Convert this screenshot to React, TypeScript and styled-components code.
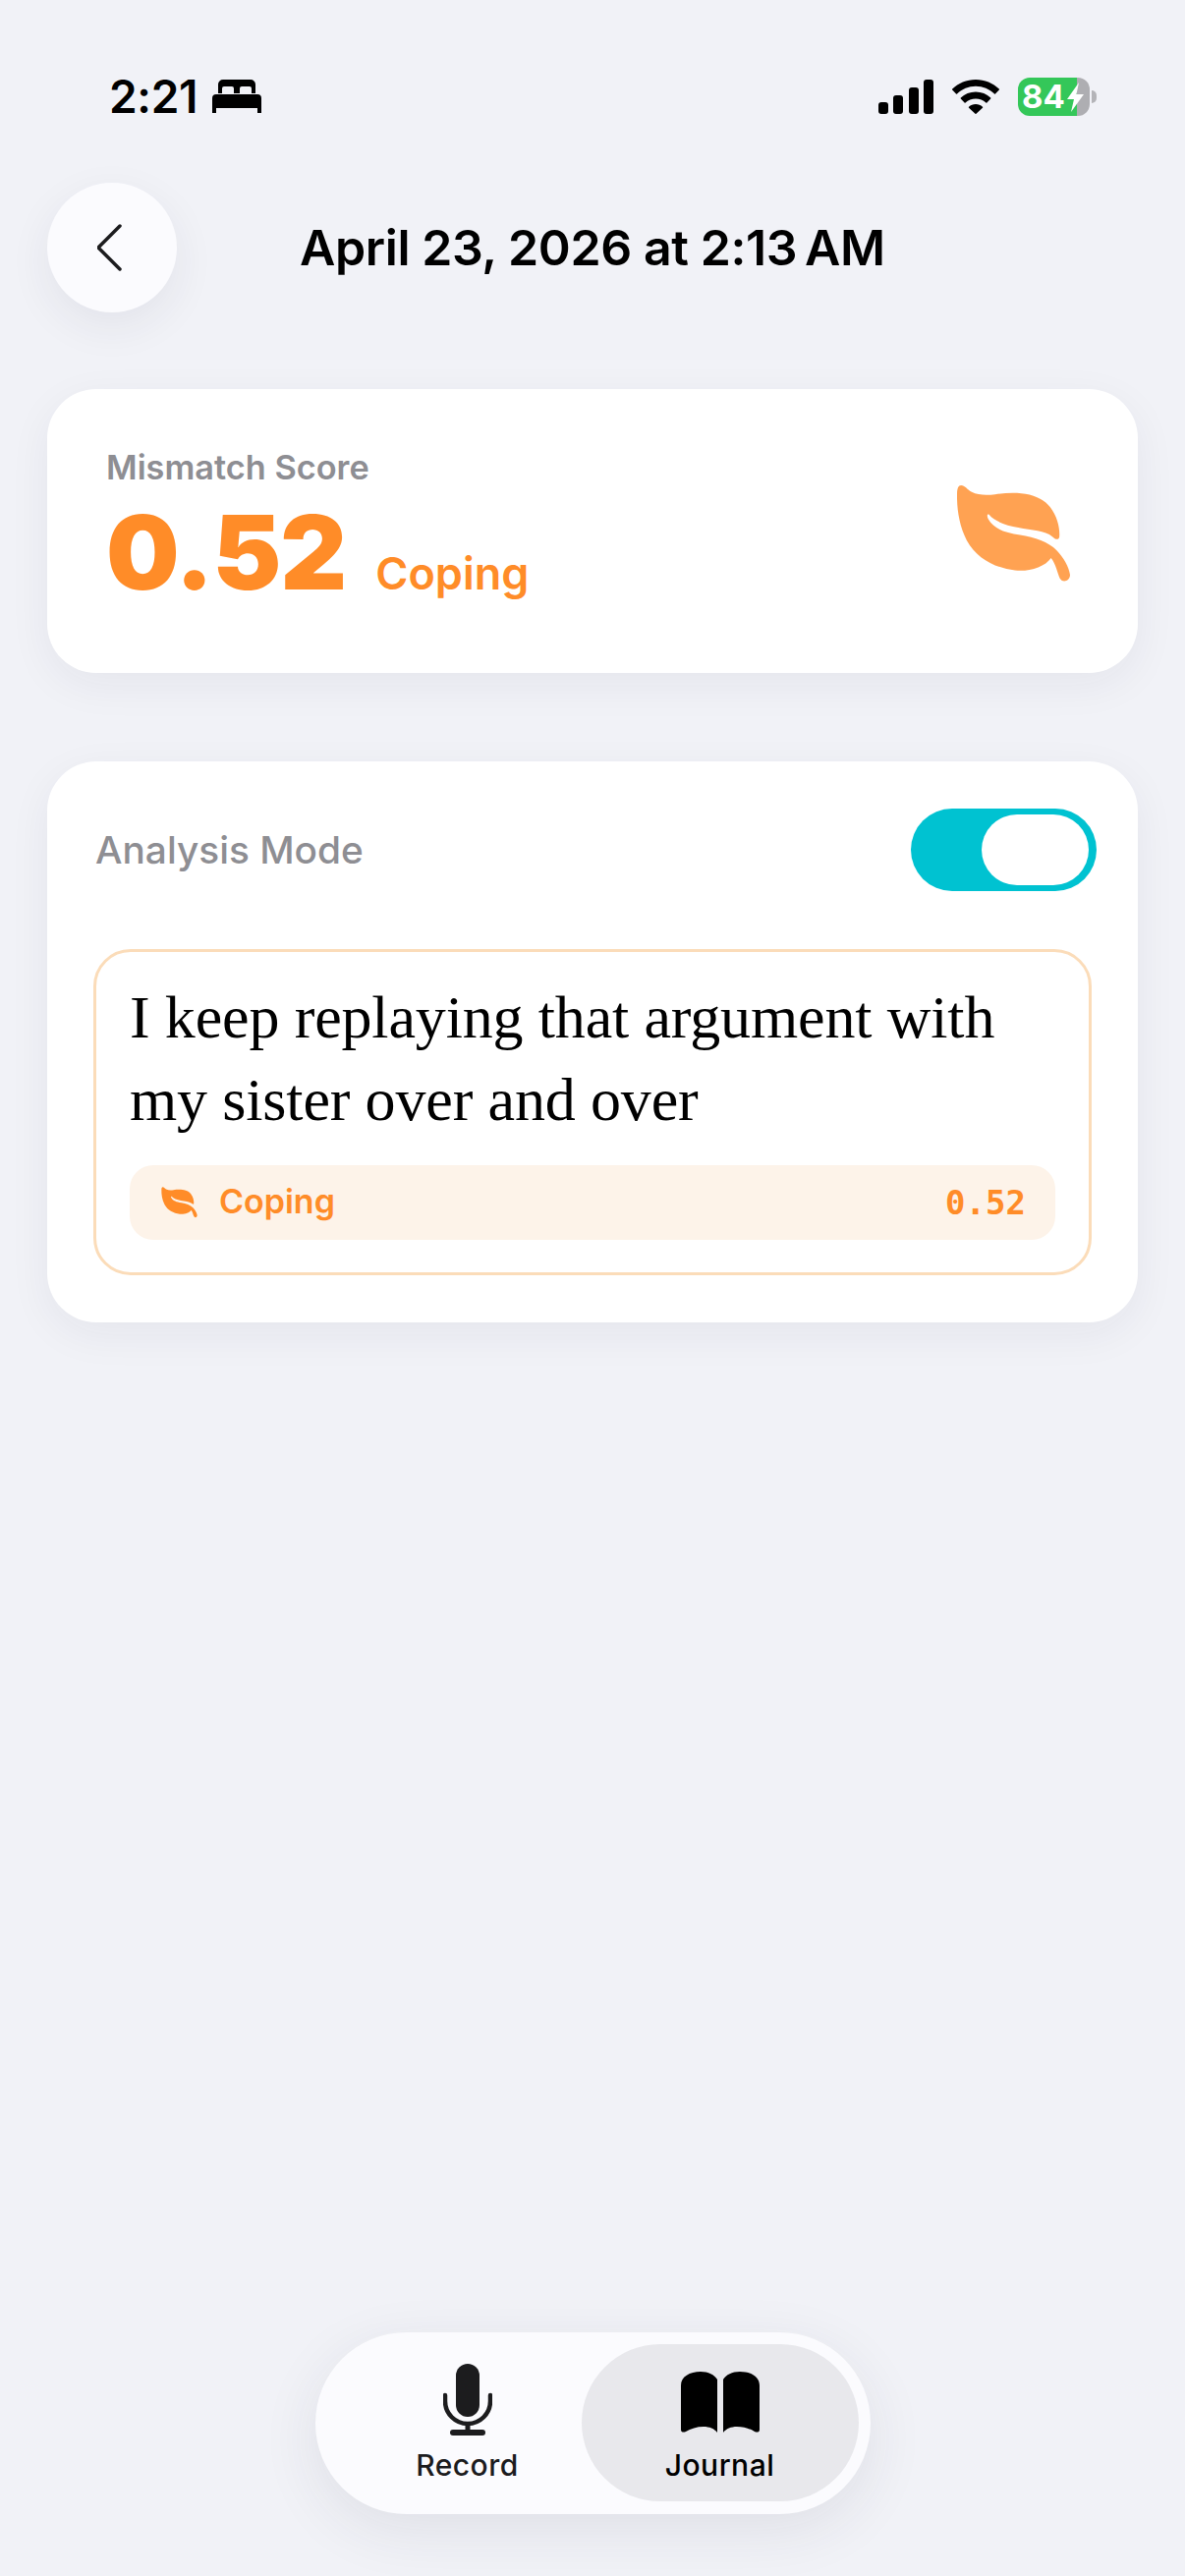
import React from "react";
import styled, { createGlobalStyle } from "styled-components";

const Global = createGlobalStyle`
  html, body { margin: 0; padding: 0; background: #f1f2f7; }
  * { box-sizing: border-box; }
`;

const Page = styled.div`
  width: 1206px;
  height: 2622px;
  display: flex;
  flex-direction: column;
  overflow: hidden;
  background: #f1f2f7;
  font-family: Inter, "Liberation Sans", sans-serif;
  color: #000;
`;

const StatusBar = styled.div`
  height: 78px;
  margin-top: 59px;
  padding: 0 97px 0 111px;
  display: flex;
  align-items: center;
  justify-content: space-between;
`;

const StatusGroup = styled.div<{ $gap: number }>`
  display: flex;
  align-items: center;
  gap: ${(p) => p.$gap}px;
`;

const Clock = styled.span`
  font-size: 46px;
  font-weight: 600;
  letter-spacing: -0.3px;
  line-height: 46px;
`;

const Battery = styled.div`
  position: relative;
  width: 73px;
  height: 39px;
  border-radius: 12px;
  background: linear-gradient(90deg, #34c759 0 82%, #aeaeb2 82% 100%);
  color: #fff;
  font-size: 33px;
  font-weight: 700;
  line-height: 39px;
  padding-left: 4px;
  &::after {
    content: "";
    position: absolute;
    right: -7px;
    top: 13px;
    width: 5px;
    height: 13px;
    border-radius: 0 6px 6px 0;
    background: #b4b4b8;
  }
`;

const BoltMark = styled.svg`
  position: absolute;
  left: 50px;
  top: 5px;
`;

const Header = styled.div`
  margin-top: 49px;
  padding: 0 48px;
  height: 132px;
  display: flex;
  align-items: center;
  gap: 125px;
`;

const BackButton = styled.button`
  width: 132px;
  height: 132px;
  padding: 0;
  border: 0;
  border-radius: 50%;
  background: #fbfbfe;
  box-shadow: 0 14px 44px rgba(40, 40, 70, 0.07);
  display: flex;
  align-items: center;
  justify-content: center;
`;

const Title = styled.h1`
  margin: 0;
  font-size: 50px;
  font-weight: 600;
  letter-spacing: -0.4px;
  line-height: 60px;
`;

const Card = styled.section<{ $h: number; $top: number }>`
  margin: ${(p) => p.$top}px 48px 0;
  height: ${(p) => p.$h}px;
  border-radius: 50px;
  background: #fff;
  box-shadow: 0 12px 44px rgba(40, 40, 70, 0.06);
`;

const ScoreCard = styled(Card)`
  padding: 0 68px 0 60px;
  display: flex;
  align-items: center;
  justify-content: space-between;
`;

const ScoreText = styled.div`
  display: flex;
  flex-direction: column;
  margin-top: -12px;
`;

const ScoreLabel = styled.span`
  color: #8e8e93;
  font-size: 34.3px;
  font-weight: 600;
  line-height: 40px;
`;

const ModeLabel = styled.span`
  color: #8e8e93;
  font-size: 38.8px;
  font-weight: 500;
  line-height: 46px;
`;

const ScoreRow = styled.div`
  display: flex;
  align-items: baseline;
  gap: 30px;
  margin-top: 14px;
`;

const ScoreValue = styled.span`
  color: #ff8c28;
  font-size: 105px;
  font-weight: 900;
  line-height: 104px;
  letter-spacing: -1px;
`;

const ScoreTag = styled.span`
  color: #ff8c28;
  font-size: 45px;
  font-weight: 600;
`;

const LeafMark = styled.svg<{ $fade?: boolean }>`
  display: block;
  flex: none;
  opacity: ${(p) => (p.$fade ? 0.8 : 1)};
  margin-top: ${(p) => (p.$fade ? 6 : 0)}px;
`;

const AnalysisCard = styled(Card)`
  padding: 48px 47px 48px 47px;
  display: flex;
  flex-direction: column;
`;

const ModeRow = styled.div`
  display: flex;
  align-items: center;
  justify-content: space-between;
  height: 84px;
  padding-left: 2px;
  margin-right: -5px;
`;

const Toggle = styled.div`
  width: 189px;
  height: 84px;
  border-radius: 42px;
  background: #00c2d1;
  display: flex;
  align-items: center;
  justify-content: flex-end;
  padding-right: 8px;
`;

const Knob = styled.div`
  width: 109px;
  height: 72px;
  border-radius: 36px;
  background: #fff;
`;

const Sentence = styled.div`
  margin-top: 59px;
  height: 333px;
  border: 3px solid #fbdcb9;
  border-radius: 38px;
  padding: 24px 34px 0;
  display: flex;
  flex-direction: column;
`;

const SentenceText = styled.p`
  margin: 0;
  font-family: "Liberation Serif", serif;
  font-size: 62px;
  line-height: 84px;
  letter-spacing: -0.15px;
  color: #000;
`;

const Chip = styled.div`
  margin-top: 25px;
  height: 76px;
  border-radius: 24px;
  background: #fdf3e9;
  padding: 0 30px 0 32px;
  display: flex;
  align-items: center;
  color: #ff8c28;
`;

const ChipLabel = styled.span`
  font-size: 34px;
  font-weight: 600;
  line-height: 40px;
  margin: -2px 0 0 22px;
  flex: 1;
`;

const ChipValue = styled.span`
  font-family: "DejaVu Sans Mono", monospace;
  font-size: 34px;
  font-weight: 700;
`;

const Nav = styled.nav`
  margin: auto auto 63px;
  width: 565px;
  height: 185px;
  border-radius: 93px;
  background: #fbfbfe;
  box-shadow: 0 16px 60px rgba(40, 40, 70, 0.09);
  padding: 12px 12px 12px 0;
  display: flex;
`;

const NavItem = styled.div<{ $active?: boolean }>`
  width: ${(p) => (p.$active ? 282 : 271)}px;
  height: 160px;
  padding-left: ${(p) => (p.$active ? 0 : 39)}px;
  border-radius: 80px;
  background: ${(p) => (p.$active ? "#e8e8ec" : "transparent")};
  display: flex;
  flex-direction: column;
  align-items: center;
  color: #000;
`;

const NavIcon = styled.div`
  height: 94px;
  display: flex;
  align-items: flex-end;
  justify-content: center;
`;

const BookMark = styled.svg`
  margin-bottom: 4px;
`;

const NavLabel = styled.span<{ $active?: boolean }>`
  margin-top: 11px;
  font-size: 30px;
  font-weight: 500;
  line-height: 36px;
  letter-spacing: 0.5px;
  color: ${(p) => (p.$active ? "#000" : "#1c1c1e")};
`;

const leafPath =
  "M88 70C100 70 105 82 120 90C140 100 165 100 190 97C250 88 320 90 355 135C378 165 385 200 383 225C381 236 370 232 362 224C340 205 300 205 260 197C225 190 190 180 172 158C166 154 165 163 170 172C185 200 220 212 265 219C310 226 350 240 375 265C395 285 412 315 415 338C416 355 395 365 385 350C378 335 372 305 358 288C340 315 290 330 250 325C190 318 135 290 105 235C82 190 75 140 76 95C76 80 80 70 88 70Z";

const Leaf = ({ size, fade }: { size: number; fade?: boolean }) => (
  <LeafMark $fade={fade} width={size} height={size * (300 / 345)} viewBox="73 67 345 300" fill="#ff8c28">
    <path d={leafPath} />
  </LeafMark>
);

export default function App() {
  return (
    <Page>
      <Global />
      <StatusBar>
        <StatusGroup $gap={15}>
          <Clock>2:21</Clock>
          <svg width="50" height="34" viewBox="0 0 50 34" fill="#000">
            <path d="M6 14V5a5 5 0 0 1 5-5h28a5 5 0 0 1 5 5v9h-4V9a2 2 0 0 0-2-2h-8a2 2 0 0 0-2 2v5h-6V9a2 2 0 0 0-2-2h-8a2 2 0 0 0-2 2v5Z" />
            <path d="M4 15h42a4 4 0 0 1 4 4v15h-4v-5H4v5H0V19a4 4 0 0 1 4-4Z" />
          </svg>
        </StatusGroup>
        <StatusGroup $gap={19}>
          <svg width="56" height="35" viewBox="0 0 56 35" fill="#000">
            <rect x="0" y="23" width="10" height="12" rx="3" />
            <rect x="15" y="16" width="10" height="19" rx="3" />
            <rect x="31" y="8" width="10" height="27" rx="3" />
            <rect x="46" y="0" width="10" height="35" rx="3" />
          </svg>
          <svg width="48" height="35" viewBox="0 0 48 35" fill="#000">
            <path d="M24 0c9.300 0 17.600 3.600 23.800 9.500.3.300.3.700 0 1l-3.800 3.900c-.3.300-.7.300-1 0C38 9.700 31.300 6.800 24 6.800S10 9.700 5 14.400c-.3.300-.7.300-1 0L.2 10.500c-.3-.3-.3-.7 0-1C6.400 3.600 14.700 0 24 0Z" />
            <path d="M24 12.500c5.900 0 11.200 2.300 15.200 6 .3.300.3.700 0 1l-3.800 3.900c-.3.300-.7.300-1 0-2.700-2.500-6.400-4-10.400-4s-7.700 1.500-10.400 4c-.3.300-.7.300-1 0l-3.800-3.900c-.3-.3-.3-.7 0-1 4-3.700 9.300-6 15.200-6Z" />
            <path d="M24 25c2.700 0 5.100 1 7 2.700.3.300.3.700 0 1l-6.500 6c-.3.300-.7.300-1 0l-6.500-6c-.3-.3-.3-.7 0-1 1.900-1.700 4.300-2.700 7-2.700Z" />
          </svg>
          <Battery>
            84
            <BoltMark width="17" height="30" viewBox="0 0 17 30" fill="#fff">
              <path d="M12 0 0 17h7l-3 13L17 12H9.500Z" />
            </BoltMark>
          </Battery>
        </StatusGroup>
      </StatusBar>

      <Header>
        <BackButton aria-label="Back">
          <svg width="30" height="48" viewBox="0 0 30 48" fill="none" stroke="#1c1c1e" strokeWidth="3.500" strokeLinecap="round" strokeLinejoin="round">
            <path d="M23 2 1 24l22 22" />
          </svg>
        </BackButton>
        <Title>April 23, 2026 at 2:13{"\u202F"}AM</Title>
      </Header>

      <ScoreCard $h={289} $top={78}>
        <ScoreText>
          <ScoreLabel>Mismatch Score</ScoreLabel>
          <ScoreRow>
            <ScoreValue>0.52</ScoreValue>
            <ScoreTag>Coping</ScoreTag>
          </ScoreRow>
        </ScoreText>
        <Leaf size={117} fade />
      </ScoreCard>

      <AnalysisCard $h={571} $top={90}>
        <ModeRow>
          <ModeLabel>Analysis Mode</ModeLabel>
          <Toggle>
            <Knob />
          </Toggle>
        </ModeRow>
        <Sentence>
          <SentenceText>
            I keep replaying that argument with
            <br />
            my sister over and over
          </SentenceText>
          <Chip>
            <Leaf size={37} />
            <ChipLabel>Coping</ChipLabel>
            <ChipValue>0.52</ChipValue>
          </Chip>
        </Sentence>
      </AnalysisCard>

      <Nav>
        <NavItem>
          <NavIcon>
            <svg width="50" height="74" viewBox="0 0 50 74" fill="none">
              <rect x="13" y="0" width="24" height="54" rx="12" fill="#1c1c1e" />
              <path d="M2 32v6a23 23 0 0 0 46 0v-6" stroke="#1c1c1e" strokeWidth="4.500" strokeLinecap="round" />
              <path d="M25 61v9" stroke="#1c1c1e" strokeWidth="5" />
              <path d="M10 70h30" stroke="#1c1c1e" strokeWidth="6" strokeLinecap="round" />
            </svg>
          </NavIcon>
          <NavLabel>Record</NavLabel>
        </NavItem>
        <NavItem $active>
          <NavIcon>
            <BookMark width="80" height="62" viewBox="0 0 80 62" fill="#000">
              <path d="M37 8v54c-3-4-8-6-14-6-7 0-13 2-18 5-2 1-5 1-5-2V14C0 5 9 0 20 0c8 0 14 3 17 8Z" />
              <path d="M43 8v54c3-4 8-6 14-6 7 0 13 2 18 5 2 1 5 1 5-2V14C80 5 71 0 60 0c-8 0-14 3-17 8Z" />
            </BookMark>
          </NavIcon>
          <NavLabel $active>Journal</NavLabel>
        </NavItem>
      </Nav>
    </Page>
  );
}
